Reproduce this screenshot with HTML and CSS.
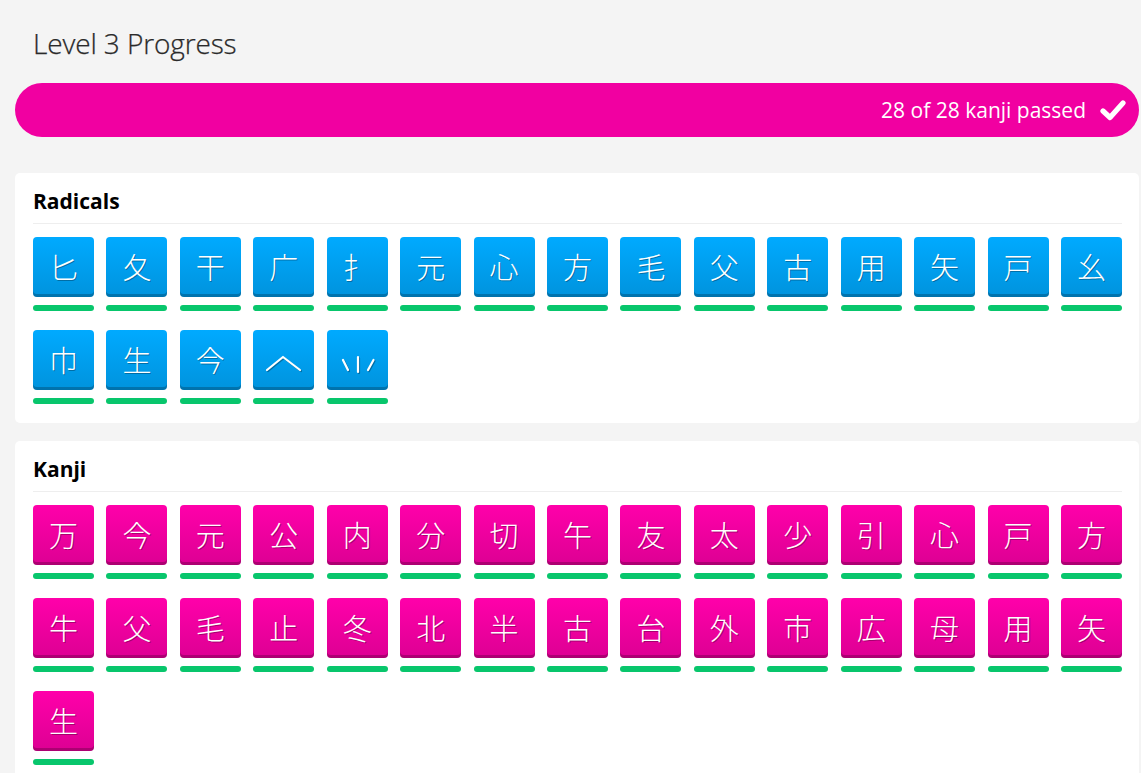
FILE: index.html
```html
<!DOCTYPE html>
<html lang="en">
<head>
<meta charset="utf-8">
<title>Level 3 Progress</title>
<link rel="stylesheet" href="styles.css">
</head>
<body>
<main class="page">
  <h1 class="title">Level 3 Progress</h1>
  <div class="progress">
    <span class="progress-text">28 of 28 kanji passed</span>
    <svg class="check" width="28" height="24" viewBox="0 0 28 24" aria-hidden="true">
      <polyline points="4,13 11,19.5 24,5" fill="none" stroke="#fff" stroke-width="5.2" stroke-linecap="round" stroke-linejoin="round"/>
    </svg>
  </div>

  <section class="card">
    <h2 class="card-title">Radicals</h2>
    <div class="grid">
      <div class="item"><div class="tile radical">匕</div><div class="bar"></div></div>
      <div class="item"><div class="tile radical">夂</div><div class="bar"></div></div>
      <div class="item"><div class="tile radical">干</div><div class="bar"></div></div>
      <div class="item"><div class="tile radical">广</div><div class="bar"></div></div>
      <div class="item"><div class="tile radical">扌</div><div class="bar"></div></div>
      <div class="item"><div class="tile radical">元</div><div class="bar"></div></div>
      <div class="item"><div class="tile radical">心</div><div class="bar"></div></div>
      <div class="item"><div class="tile radical">方</div><div class="bar"></div></div>
      <div class="item"><div class="tile radical">毛</div><div class="bar"></div></div>
      <div class="item"><div class="tile radical">父</div><div class="bar"></div></div>
      <div class="item"><div class="tile radical">古</div><div class="bar"></div></div>
      <div class="item"><div class="tile radical">用</div><div class="bar"></div></div>
      <div class="item"><div class="tile radical">矢</div><div class="bar"></div></div>
      <div class="item"><div class="tile radical">戸</div><div class="bar"></div></div>
      <div class="item"><div class="tile radical">幺</div><div class="bar"></div></div>
      <div class="item"><div class="tile radical">巾</div><div class="bar"></div></div>
      <div class="item"><div class="tile radical">生</div><div class="bar"></div></div>
      <div class="item"><div class="tile radical">今</div><div class="bar"></div></div>
      <div class="item">
        <div class="tile radical" title="hat">
          <svg class="radical-img" width="61" height="57" viewBox="0 0 61 57" aria-label="hat radical">
            <g fill="none" stroke-linecap="round" stroke-linejoin="round" stroke-width="2.2">
              <polyline class="shadow" points="15,41 31,28 48,41"/>
              <polyline points="14,40 30,27 47,40" stroke="#fff"/>
            </g>
          </svg>
        </div>
        <div class="bar"></div>
      </div>
      <div class="item">
        <div class="tile radical" title="triceratops">
          <svg class="radical-img" width="61" height="57" viewBox="0 0 61 57" aria-label="triceratops radical">
            <g fill="none" stroke-linecap="round" stroke-width="2.2">
              <g class="shadow">
                <line x1="17" y1="31" x2="22" y2="41"/>
                <line x1="32" y1="28" x2="32" y2="43"/>
                <line x1="47.5" y1="31" x2="42" y2="41"/>
              </g>
              <g stroke="#fff">
                <line x1="16" y1="30" x2="21" y2="40"/>
                <line x1="31" y1="27" x2="31" y2="42"/>
                <line x1="46.5" y1="30" x2="41" y2="40"/>
              </g>
            </g>
          </svg>
        </div>
        <div class="bar"></div>
      </div>
    </div>
  </section>

  <section class="card">
    <h2 class="card-title">Kanji</h2>
    <div class="grid">
      <div class="item"><div class="tile kanji">万</div><div class="bar"></div></div>
      <div class="item"><div class="tile kanji">今</div><div class="bar"></div></div>
      <div class="item"><div class="tile kanji">元</div><div class="bar"></div></div>
      <div class="item"><div class="tile kanji">公</div><div class="bar"></div></div>
      <div class="item"><div class="tile kanji">内</div><div class="bar"></div></div>
      <div class="item"><div class="tile kanji">分</div><div class="bar"></div></div>
      <div class="item"><div class="tile kanji">切</div><div class="bar"></div></div>
      <div class="item"><div class="tile kanji">午</div><div class="bar"></div></div>
      <div class="item"><div class="tile kanji">友</div><div class="bar"></div></div>
      <div class="item"><div class="tile kanji">太</div><div class="bar"></div></div>
      <div class="item"><div class="tile kanji">少</div><div class="bar"></div></div>
      <div class="item"><div class="tile kanji">引</div><div class="bar"></div></div>
      <div class="item"><div class="tile kanji">心</div><div class="bar"></div></div>
      <div class="item"><div class="tile kanji">戸</div><div class="bar"></div></div>
      <div class="item"><div class="tile kanji">方</div><div class="bar"></div></div>
      <div class="item"><div class="tile kanji">牛</div><div class="bar"></div></div>
      <div class="item"><div class="tile kanji">父</div><div class="bar"></div></div>
      <div class="item"><div class="tile kanji">毛</div><div class="bar"></div></div>
      <div class="item"><div class="tile kanji">止</div><div class="bar"></div></div>
      <div class="item"><div class="tile kanji">冬</div><div class="bar"></div></div>
      <div class="item"><div class="tile kanji">北</div><div class="bar"></div></div>
      <div class="item"><div class="tile kanji">半</div><div class="bar"></div></div>
      <div class="item"><div class="tile kanji">古</div><div class="bar"></div></div>
      <div class="item"><div class="tile kanji">台</div><div class="bar"></div></div>
      <div class="item"><div class="tile kanji">外</div><div class="bar"></div></div>
      <div class="item"><div class="tile kanji">市</div><div class="bar"></div></div>
      <div class="item"><div class="tile kanji">広</div><div class="bar"></div></div>
      <div class="item"><div class="tile kanji">母</div><div class="bar"></div></div>
      <div class="item"><div class="tile kanji">用</div><div class="bar"></div></div>
      <div class="item"><div class="tile kanji">矢</div><div class="bar"></div></div>
      <div class="item"><div class="tile kanji">生</div><div class="bar"></div></div>
    </div>
  </section>
</main>
</body>
</html>
```

FILE: styles.css
```css
html, body {
  margin: 0;
  padding: 0;
  background: #f4f4f4;
}

body {
  font-family: "Open Sans", "Noto Sans", "Noto Sans CJK JP", sans-serif;
  color: #333;
}

.page {
  padding: 0 2px 0 15px;
}

.title {
  margin: 0;
  padding: 28px 0 0 18px;
  font-size: 28px;
  font-weight: 300;
  line-height: 31px;
  color: #2a2a2a;
  letter-spacing: -0.12px;
  -webkit-text-stroke: 0.25px #2a2a2a;
}

.progress {
  margin-top: 24px;
  height: 54px;
  border-radius: 27px;
  background: #f100a1;
  display: flex;
  justify-content: flex-end;
  align-items: center;
  gap: 13px;
  padding-right: 12px;
}

.progress-text {
  color: #fff;
  font-size: 21px;
  line-height: 24px;
}

.check {
  display: block;
}

.card {
  margin-top: 36px;
  background: #fff;
  border-radius: 5px;
  padding: 0 17px 19px 18px;
}

.card + .card {
  margin-top: 18px;
}

.card-title {
  margin: 0;
  padding: 14px 0 8px;
  font-size: 21px;
  font-weight: 700;
  line-height: 28px;
  color: #000;
  border-bottom: 1px solid #eeeeee;
}

.grid {
  margin-top: 13px;
  display: grid;
  grid-template-columns: repeat(15, 1fr);
  column-gap: 12.36px;
  row-gap: 19px;
}

.item {
  display: flex;
  flex-direction: column;
  gap: 8px;
}

.tile {
  height: 60px;
  box-sizing: border-box;
  padding-bottom: 3px;
  border-radius: 4px;
  display: flex;
  align-items: center;
  justify-content: center;
  font-family: "Noto Sans CJK JP", sans-serif;
  font-size: 29px;
  font-weight: 300;
  color: #fff;
  text-shadow: 1px 1px 0 rgba(0, 0, 0, 0.3);
  box-shadow: inset 0 -3px 0 rgba(0, 0, 0, 0.22);
}

.radical-img {
  display: block;
}

.radical-img .shadow {
  stroke: rgba(0, 0, 0, 0.3);
}

.radical {
  background: linear-gradient(to bottom, #00aaff, #0093dd);
}

.kanji {
  background: linear-gradient(to bottom, #ff00aa, #dd0093);
}

.bar {
  height: 6px;
  border-radius: 3px;
  background: #08c66c;
}
```
